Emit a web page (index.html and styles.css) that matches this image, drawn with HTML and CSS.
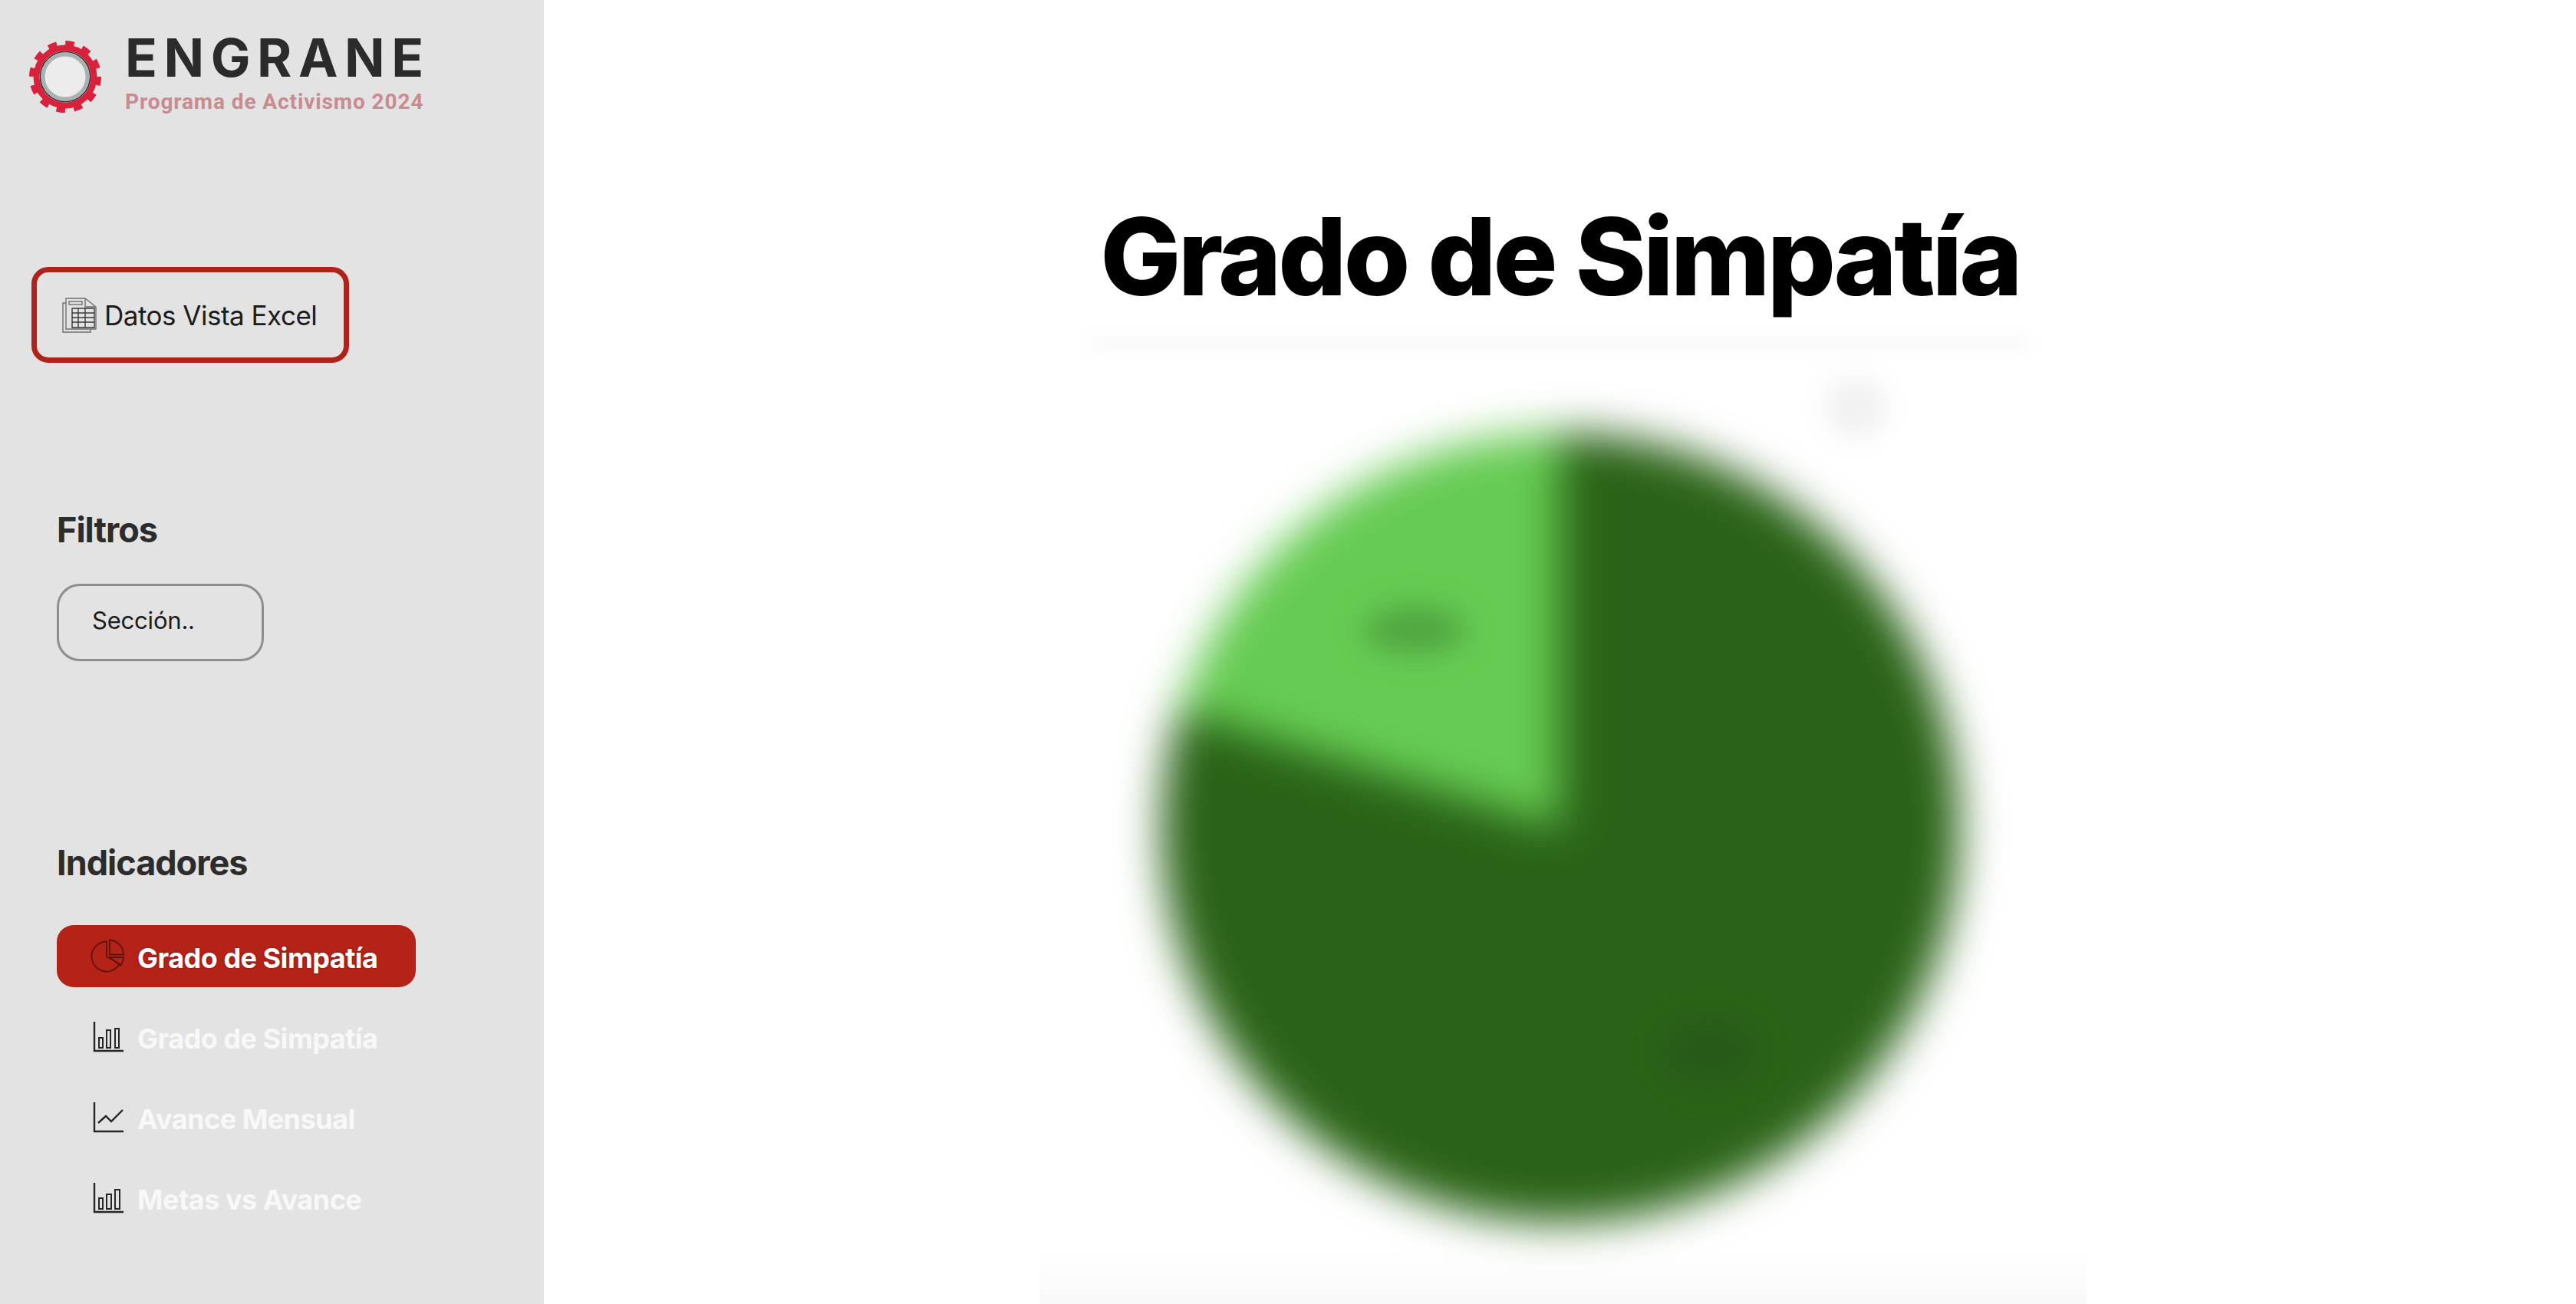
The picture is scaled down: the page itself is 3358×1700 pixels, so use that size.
FILE: index.html
```html
<!DOCTYPE html>
<html lang="es">
<head>
<meta charset="utf-8">
<title>Engrane - Grado de Simpatía</title>
<link rel="stylesheet" href="styles.css">
</head>
<body>
<div class="app">
  <aside class="sidebar">
    <div class="brand">
      <svg class="gear" viewBox="0 0 94 94">
        <circle cx="47" cy="47" r="40.5" fill="none" stroke="#d9213b" stroke-width="13" stroke-dasharray="10.6 10.6"/>
        <circle cx="47" cy="47" r="37.5" fill="none" stroke="#d9213b" stroke-width="8"/>
        <circle cx="47" cy="47" r="32.5" fill="#ececec" stroke="#2f2a2c" stroke-width="1.6"/>
        <circle cx="47" cy="47" r="29" fill="none" stroke="#a9b1b2" stroke-width="5"/>
      </svg>
      <div class="brand-text">
        <div class="brand-name">ENGRANE</div>
        <div class="brand-sub">Programa de Activismo 2024</div>
      </div>
    </div>

    <button class="excel-btn">
      <svg class="excel-icon" viewBox="0 0 46 46" fill="none" stroke="#6f6f6f" stroke-width="1.4">
        <path d="M6 7H2v38h36v-4"/>
        <path d="M6 1h25l14 11v29H6z" fill="#e3e3e3"/>
        <path d="M31 1v11h14"/>
        <rect x="10" y="5" width="17" height="4"/>
        <path d="M14 14h29v25H14zM14 20h29M14 26h29M14 32h29M22 14v25M31 14v25" stroke="#3a3a3a"/>
      </svg>
      <span>Datos Vista Excel</span>
    </button>

    <h2 class="section-title filters-title">Filtros</h2>
    <div class="select">Sección..</div>

    <h2 class="section-title indicators-title">Indicadores</h2>
    <nav class="menu">
      <a class="menu-item active">
        <svg class="icon pie-icon" viewBox="0 0 45 45" fill="none" stroke="#5e120d" stroke-width="1.8">
          <path d="M21 3.5a19.5 19.5 0 1 0 17 29L21 23z"/>
          <path d="M25 1.5a19 19 0 0 1 18 19H25z"/>
          <path d="M25 24h18a19 19 0 0 1-4 11z"/>
        </svg>
        <span class="menu-label">Grado de Simpatía</span>
      </a>
      <a class="menu-item">
        <svg class="icon" viewBox="0 0 40 40" fill="none" stroke="#262626" stroke-width="2">
          <path d="M2 0v38h38" stroke-width="2.4"/>
          <rect x="8" y="21" width="5" height="13"/>
          <rect x="18" y="11" width="5" height="23"/>
          <rect x="29" y="9" width="5" height="25"/>
        </svg>
        <span class="menu-label">Grado de Simpatía</span>
      </a>
      <a class="menu-item">
        <svg class="icon" viewBox="0 0 40 40" fill="none" stroke="#262626" stroke-width="2.4">
          <path d="M2 0v38h38"/>
          <path d="M7 27l10-9 7 7L39 10"/>
        </svg>
        <span class="menu-label">Avance Mensual</span>
      </a>
      <a class="menu-item">
        <svg class="icon" viewBox="0 0 40 40" fill="none" stroke="#262626" stroke-width="2">
          <path d="M2 0v38h38" stroke-width="2.4"/>
          <rect x="8" y="20" width="5" height="14"/>
          <rect x="18" y="15" width="6" height="19"/>
          <rect x="29" y="9" width="6" height="25"/>
        </svg>
        <span class="menu-label">Metas vs Avance</span>
      </a>
    </nav>
  </aside>

  <main class="content">
    <h1 class="title">Grado de Simpatía</h1>
    <div class="subtitle-blur"></div>
    <div class="chart">
      <div class="legend-blur"></div>
      <div class="pie"></div>
      <div class="label-blur label-light"></div>
      <div class="label-blur label-dark"></div>
    </div>
    <div class="footer-blur"></div>
  </main>
</div>
</body>
</html>
```
FILE: styles.css
```css
* { box-sizing: border-box; }
html, body { margin: 0; height: 100%; }
body { font-family: Inter, "Liberation Sans", sans-serif; background: #fff; overflow: hidden; }

.app { display: flex; height: 1700px; }

.sidebar {
  flex: 0 0 709px;
  background: #e3e3e3;
  display: flex;
  flex-direction: column;
  align-items: flex-start;
  padding: 40px 0 0 74px;
}

.brand { display: flex; align-items: flex-start; gap: 31px; margin-left: -36px; }
.gear { width: 94px; height: 94px; flex: none; margin-top: 13px; }
.brand-text { display: flex; flex-direction: column; }
.brand-name {
  font-family: Inter, sans-serif;
  font-weight: 700;
  font-size: 69px;
  line-height: 70px;
  letter-spacing: 8.6px;
  color: #2b2b2b;
}
.brand-sub {
  font-family: Roboto, sans-serif;
  font-weight: 700;
  font-size: 28px;
  line-height: 34px;
  letter-spacing: 0.9px;
  color: #c98b8f;
  margin-top: 6px;
}

.excel-btn {
  margin: 198px 0 0 -33px;
  width: 414px;
  height: 125px;
  border: 7px solid #b0231a;
  border-radius: 22px;
  background: transparent;
  display: flex;
  align-items: center;
  gap: 10px;
  padding: 0 0 0 32px;
  font-family: Inter, sans-serif;
  font-size: 35px;
  letter-spacing: -0.5px;
  color: #1c1c1c;
}
.excel-icon { width: 46px; height: 46px; flex: none; }

.section-title {
  margin: 0;
  font-weight: 700;
  font-size: 45px;
  line-height: 54px;
  letter-spacing: -1px;
  color: #2c2c2c;
}
.filters-title { margin-top: 191px; }

.select {
  margin-top: 43px;
  width: 270px;
  height: 101px;
  border: 3px solid #8e8e8e;
  border-radius: 30px;
  padding: 0 0 6px 43px;
  display: flex;
  align-items: center;
  font-size: 31px;
  letter-spacing: -0.2px;
  color: #1c1c1c;
}

.indicators-title { margin-top: 236px; }

.menu { display: flex; flex-direction: column; gap: 24px; margin-top: 54px; }
.menu-item {
  width: 468px;
  height: 81px;
  border-radius: 22px;
  display: flex;
  align-items: center;
  gap: 18px;
  padding-left: 47px;
  font-weight: 700;
  font-size: 36px;
  letter-spacing: -0.5px;
  color: #f8f8f8;
}
.menu-label { padding-top: 4px; }
.menu-item.active {
  background: #b52318;
  color: #fff;
  text-shadow: 0 0 3px rgba(90, 10, 5, 0.6);
}
.icon { width: 40px; height: 40px; flex: none; }
.pie-icon { width: 45px; height: 45px; margin-left: -3px; margin-right: -2px; }

.content {
  flex: 1;
  display: flex;
  flex-direction: column;
  align-items: center;
  min-width: 0;
}

.title {
  margin: 245px 0 0 0;
  font-weight: 800;
  font-size: 140px;
  line-height: 179px;
  letter-spacing: -3.9px;
  color: #000;
  white-space: nowrap;
}

.subtitle-blur {
  width: 1220px;
  height: 16px;
  margin-top: 16px;
  background: #f7f7f7;
  filter: blur(10px);
}

.chart { position: relative; width: 1040px; height: 1040px; margin-top: 108px; }
.pie {
  width: 100%;
  height: 100%;
  border-radius: 50%;
  background: conic-gradient(#2a6317 0deg 287deg, #65cb52 287deg 360deg);
  filter: blur(28px);
}
.label-blur { position: absolute; filter: blur(18px); border-radius: 50%; }
.label-light { left: 265px; top: 227px; width: 130px; height: 60px; background: #50a540; }
.label-dark { left: 655px; top: 767px; width: 120px; height: 80px; background: #27591a; }
.legend-blur {
  position: absolute;
  left: 865px;
  top: -73px;
  width: 80px;
  height: 80px;
  border-radius: 50%;
  background: #f1f1f1;
  filter: blur(16px);
}

.footer-blur {
  width: 1365px;
  height: 70px;
  margin: 36px 0 0 8px;
  background: linear-gradient(#ffffff, #f9f9f9);
  flex: none;
}
```
